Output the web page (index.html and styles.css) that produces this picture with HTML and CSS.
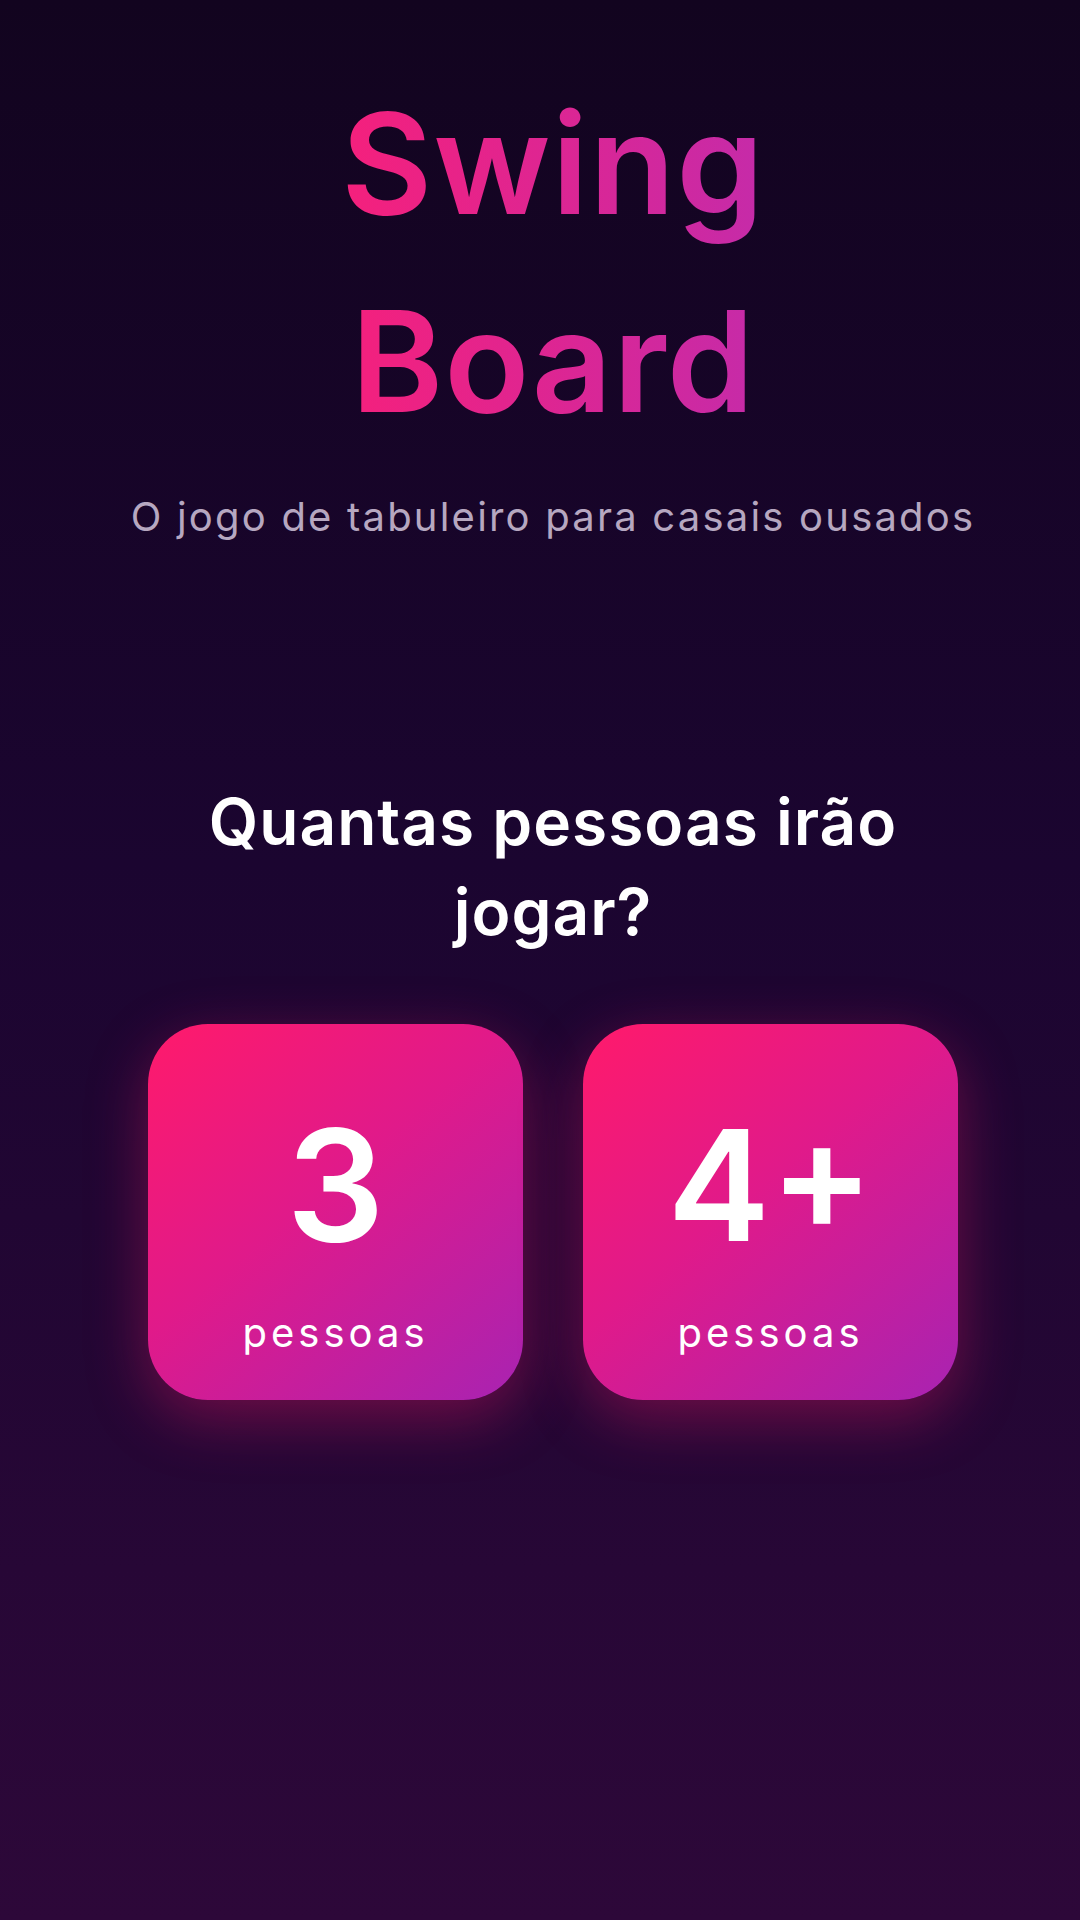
FILE: index.html
```html
<!DOCTYPE html>
<html lang="pt">

<head>
    <meta charset="UTF-8">
    <meta name="viewport" content="width=device-width, initial-scale=1.0">
    <link rel="stylesheet" href="styles.css">
    <title>Swing Board</title>
</head>

<body>

    <div class="page">
        <div class="header">
            <h1 class="title">Swing<br>Board</h1>
            <p class="subtitle">O jogo de tabuleiro para casais ousados</p>
        </div>

        <h2 class="question">Quantas pessoas irão jogar?</h2>

        <div class="options">
            <button class="option" type="button">
                <span class="count">3</span>
                <span class="label">pessoas</span>
            </button>
            <button class="option" type="button">
                <span class="count">4+</span>
                <span class="label">pessoas</span>
            </button>
        </div>
    </div>

</body>

</html>
```
FILE: styles.css
```css
body {
    margin: 0;
    padding: 0;
    min-height: 1920px;
    background: linear-gradient(180deg, #12041f 0%, #1b0530 45%, #2d0839 100%);
    font-family: "Inter", "Noto Sans", sans-serif;
    color: white;
}

.page {
    padding-left: 26px;
    text-align: center;
}

.header {
    padding-top: 64px;
}

.title {
    display: inline-block;
    margin: 0;
    font-size: 140px;
    font-weight: 600;
    line-height: 198px;
    letter-spacing: 1px;
    background: linear-gradient(90deg, #f5207c 0%, #c52ba9 100%);
    -webkit-background-clip: text;
    background-clip: text;
    color: transparent;
}

.subtitle {
    margin: 32px 0 0;
    font-size: 40px;
    font-weight: 400;
    letter-spacing: 2.2px;
    color: #b6a7c0;
}

.question {
    width: 800px;
    margin: 236px auto 0;
    font-size: 64px;
    font-weight: 600;
    line-height: 90px;
    letter-spacing: 1px;
}

.options {
    display: flex;
    justify-content: center;
    gap: 60px;
    margin-top: 67px;
}

.option {
    width: 375px;
    height: 376px;
    border: none;
    border-radius: 60px;
    padding: 0;
    background: linear-gradient(140deg, #ff1a6b 0%, #e01a8a 45%, #a823b2 100%);
    box-shadow: 0 18px 60px rgba(255, 25, 110, 0.35);
    color: white;
    font-family: inherit;
    display: flex;
    flex-direction: column;
    align-items: center;
    cursor: pointer;
}

.count {
    margin-top: 86px;
    font-size: 154px;
    font-weight: 600;
    line-height: 150px;
}

.label {
    margin-top: 48px;
    font-size: 40px;
    font-weight: 400;
    letter-spacing: 4px;
}
```
